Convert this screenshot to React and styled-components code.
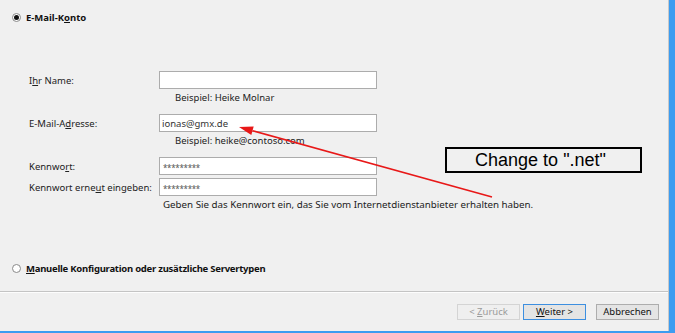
import React from "react";
import styled, { createGlobalStyle } from "styled-components";

const Global = createGlobalStyle`
  html, body { margin: 0; padding: 0; background: #f0f0f0; }
  body { font-family: "Noto Sans", "Open Sans", sans-serif; }
`;

const Window = styled.div`
  position: relative;
  width: 675px;
  height: 333px;
  box-sizing: border-box;
  background: #f0f0f0;
  border-right: 6px solid #3c9cf0;
  border-bottom: 2px solid #3c9cf0;
  display: flex;
  flex-direction: column;
  overflow: hidden;
`;

const Inner = styled.div`
  flex: 1;
  min-height: 0;
  display: flex;
  flex-direction: column;
  border-right: 1px solid #c8c8c8;
`;

const Content = styled.div`
  flex: 1;
  min-height: 0;
  display: flex;
  flex-direction: column;
  padding: 12px 0 0 12px;
`;

const RadioRow = styled.label`
  display: flex;
  align-items: center;
  gap: 5px;
  height: 11px;
  margin-top: ${(p) => p.$mt || 0}px;
  font-size: 9.5px;
  font-weight: 700;
  letter-spacing: ${(p) => p.$ls || 0}px;
  color: #111;
  white-space: nowrap;
`;

const RadioCircle = styled.span`
  flex: none;
  width: 9px;
  height: 9px;
  box-sizing: border-box;
  border-radius: 50%;
  border: 1px solid #8a8a8a;
  background: #fff;
  display: flex;
  align-items: center;
  justify-content: center;
  &::after {
    content: "";
    width: 5px;
    height: 5px;
    border-radius: 50%;
    background: ${(p) => (p.$checked ? "#111" : "transparent")};
  }
`;

const Key = styled.span`
  text-decoration: underline;
  text-underline-offset: 1px;
`;

const Form = styled.div`
  display: grid;
  grid-template-columns: 130px 218px;
  margin: 48px 0 0 17px;
  font-size: 9.5px;
  color: #222;
`;

const Label = styled.div`
  height: 18px;
  display: flex;
  align-items: center;
  margin-top: ${(p) => p.$mt || 0}px;
  white-space: nowrap;
`;

const Input = styled.div`
  height: 18px;
  box-sizing: border-box;
  border: 1px solid #acacac;
  background: #fff;
  display: flex;
  align-items: center;
  padding-left: ${(p) => (p.$pw ? 3 : 2)}px;
  padding-top: ${(p) => (p.$pw ? 3 : 0)}px;
  font-size: ${(p) => (p.$pw ? "8px" : "9.5px")};
  letter-spacing: ${(p) => (p.$pw ? "-0.3px" : "0")};
  color: ${(p) => (p.$pw ? "#555" : "#333")};
  margin-top: ${(p) => p.$mt || 0}px;
`;

const Hint = styled.div`
  grid-column: 2;
  padding-left: ${(p) => p.$pl || 16}px;
  height: 16px;
  display: flex;
  align-items: center;
  white-space: nowrap;
  font-size: ${(p) => p.$fs || 9.5}px;
  color: #222;
`;

const Footer = styled.div`
  flex: none;
  height: 40px;
  border-top: 1px solid #c4c4c4;
  box-shadow: inset 0 1px 0 #fdfdfd;
  display: flex;
  justify-content: flex-end;
  align-items: flex-start;
  padding: 12px 9px 0 0;
  box-sizing: border-box;
`;

const Button = styled.button`
  width: 63px;
  height: 16px;
  margin-left: ${(p) => p.$ml || 0}px;
  box-sizing: border-box;
  padding: 0;
  font-family: inherit;
  font-size: 9.5px;
  line-height: 1;
  color: ${(p) => (p.$disabled ? "#9a9a9a" : "#111")};
  background: ${(p) => (p.$disabled ? "#efefef" : "#e4e4e4")};
  border: 1px solid
    ${(p) => (p.$primary ? "#3d8fe0" : p.$disabled ? "#d4d4d4" : "#adadad")};
`;

const Callout = styled.div`
  position: absolute;
  left: 445px;
  top: 147px;
  width: 197px;
  height: 26px;
  box-sizing: border-box;
  border: 2px solid #000;
  display: flex;
  align-items: center;
  justify-content: center;
  padding-right: 6px;
  font-family: "Liberation Sans", Arial, sans-serif;
  font-size: 18px;
  color: #000;
`;

const Overlay = styled.svg`
  position: absolute;
  left: 0;
  top: 0;
  pointer-events: none;
`;

export default function App() {
  const x1 = 492, y1 = 197, x2 = 239, y2 = 127;
  const ang = Math.atan2(y2 - y1, x2 - x1);
  const len = 14, half = 4.5;
  const bx = x2 - len * Math.cos(ang), by = y2 - len * Math.sin(ang);
  const p1 = `${bx + half * Math.sin(ang)},${by - half * Math.cos(ang)}`;
  const p2 = `${bx - half * Math.sin(ang)},${by + half * Math.cos(ang)}`;
  return (
    <Window>
      <Global />
      <Inner>
        <Content>
          <RadioRow>
            <RadioCircle $checked />
            <span>
              E-Mail-K<Key>o</Key>nto
            </span>
          </RadioRow>
          <Form>
            <Label>
              <span>
                I<Key>h</Key>r Name:
              </span>
            </Label>
            <Input />
            <Hint>Beispiel: Heike Molnar</Hint>

            <Label $mt={9}>
              <span>
                E-Mail-A<Key>d</Key>resse:
              </span>
            </Label>
            <Input $mt={9}>ionas@gmx.de</Input>
            <Hint>Beispiel: heike@contoso.com</Hint>

            <Label $mt={9}>
              <span>
                Kennwo<Key>r</Key>t:
              </span>
            </Label>
            <Input $mt={9} $pw>*********</Input>
            <Label $mt={3}>
              <span>
                Kennwort erne<Key>u</Key>t eingeben:
              </span>
            </Label>
            <Input $mt={3} $pw>*********</Input>
            <Hint $pl={4} $fs={9.75}>
              Geben Sie das Kennwort ein, das Sie vom Internetdienstanbieter erhalten haben.
            </Hint>
          </Form>
          <RadioRow $mt={51} $ls={-0.25}>
            <RadioCircle />
            <span>
              <Key>M</Key>anuelle Konfiguration oder zusätzliche Servertypen
            </span>
          </RadioRow>
        </Content>
        <Footer>
          <Button $disabled>
            &lt; <Key>Z</Key>urück
          </Button>
          <Button $primary $ml={3}>
            <Key>W</Key>eiter &gt;
          </Button>
          <Button $ml={10}>Abbrechen</Button>
        </Footer>
      </Inner>
      <Callout>Change to ".net"</Callout>
      <Overlay width="675" height="333">
        <line x1={x1} y1={y1} x2={bx} y2={by} stroke="#e81818" strokeWidth="1.6" />
        <polygon points={`${x2},${y2} ${p1} ${p2}`} fill="#e81818" />
      </Overlay>
    </Window>
  );
}
